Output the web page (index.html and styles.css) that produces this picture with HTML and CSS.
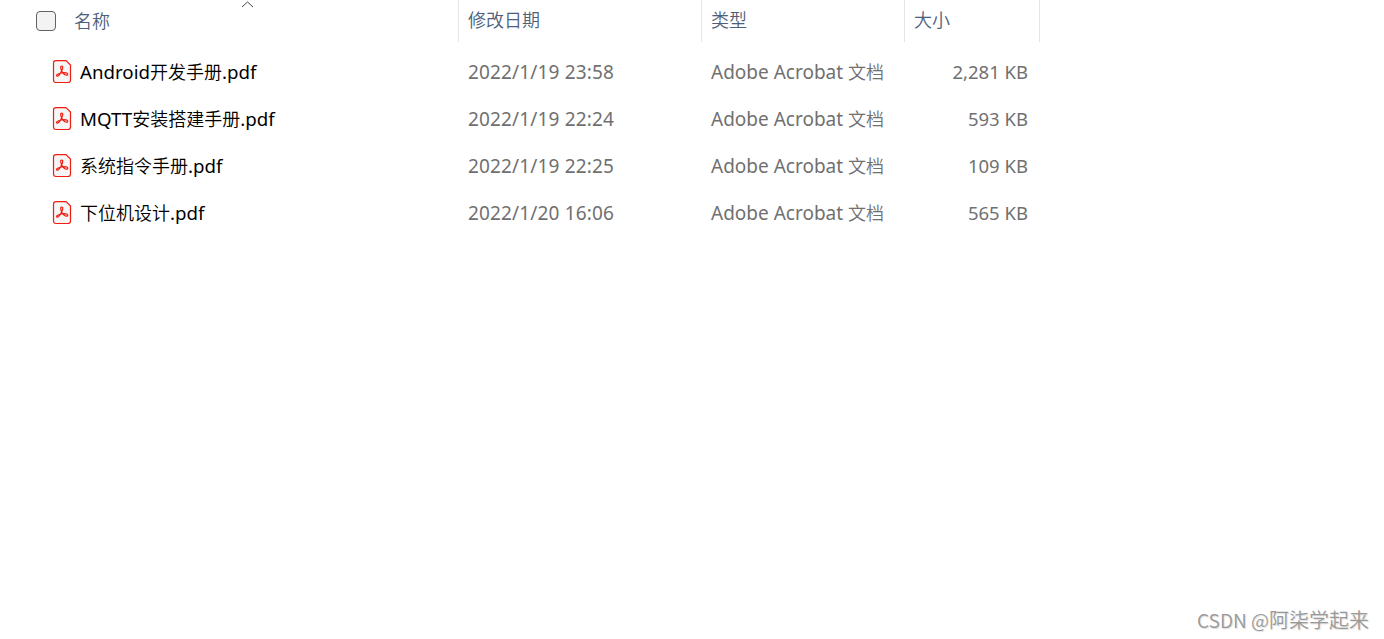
FILE: index.html
```html
<!DOCTYPE html>
<html lang="zh-CN">

<head>
    <meta charset="UTF-8">
    <title>文件列表</title>
    <link rel="stylesheet" href="styles.css">
</head>

<body>
    <!-- 图标只定义一次，下面每一行引用 -->
    <svg class="defs">
        <symbol id="pdf" viewBox="0 0 20 24">
            <path d="M4 .6H14L18.5 5V20Q18.5 22.5 16 22.5H4Q1.5 22.5 1.5 20V3Q1.5 .6 4 .6Z" fill="#f5f5f5" stroke="#f21d12" stroke-width="1.2" />
            <path d="M9.5 10.4C8.5 8.3 8.3 6 9.7 6C11.2 6 10.9 8.4 9.8 10.6C8.7 13.1 7.2 16 5.6 16.1C4.2 16.2 4 14.9 5.6 14.2C8 13 11.6 12.5 14.2 12.9C16.3 13.3 16.2 15.3 14.4 15.1C12.5 14.8 10.5 12.7 9.5 10.4Z" fill="none" stroke="#f21d12" stroke-width="1.2" />
        </symbol>
    </svg>
    <div class="row head">
        <div class="name">
            <span class="check"></span>名称
            <svg class="sort" viewBox="0 0 13 8"><path d="M1 7L6.5 2L12 7" /></svg>
        </div>
        <div>修改日期</div>
        <div>类型</div>
        <div>大小</div>
    </div>
    <div class="list">
        <div class="row">
            <div class="name"><svg class="icon"><use href="#pdf" /></svg><b>Android</b>开发手册<b>.pdf</b></div>
            <div class="date">2022/1/19 23:58</div>
            <div><b class="type">Adobe Acrobat </b>文档</div>
            <div class="size">2,281 KB</div>
        </div>
        <div class="row">
            <div class="name"><svg class="icon"><use href="#pdf" /></svg><b>MQTT</b>安装搭建手册<b>.pdf</b></div>
            <div class="date">2022/1/19 22:24</div>
            <div><b class="type">Adobe Acrobat </b>文档</div>
            <div class="size">593 KB</div>
        </div>
        <div class="row">
            <div class="name"><svg class="icon"><use href="#pdf" /></svg>系统指令手册<b>.pdf</b></div>
            <div class="date">2022/1/19 22:25</div>
            <div><b class="type">Adobe Acrobat </b>文档</div>
            <div class="size">109 KB</div>
        </div>
        <div class="row">
            <div class="name"><svg class="icon"><use href="#pdf" /></svg>下位机设计<b>.pdf</b></div>
            <div class="date">2022/1/20 16:06</div>
            <div><b class="type">Adobe Acrobat </b>文档</div>
            <div class="size">565 KB</div>
        </div>
    </div>
    <div class="watermark"><span>CSDN @</span>阿柒学起来</div>
</body>

</html>
```

FILE: styles.css
```css
* {
    box-sizing: border-box;
    padding: 0;
    margin: 0;
}

body {
    height: 639px;
    overflow: hidden;
    background-color: #fff;
    font: 18px/26px "Noto Sans", "Noto Sans CJK SC", sans-serif;
    font-weight: 350;
}

b {
    font-size: 18.7px;
    font-weight: 400;
    white-space: pre;
}

.defs {
    position: absolute;
    width: 0;
    height: 0;
}

.row {
    display: grid;
    grid-template-columns: 459px 243px 203px 135px;
    width: 1040px;
    height: 47px;
    align-items: center;
    color: #707070;
}

.row > div {
    padding-left: 9px;
    white-space: nowrap;
}

.row > .name {
    display: flex;
    align-items: center;
    padding-left: 52px;
    color: #000;
}

.head {
    height: 42px;
}

.head > div {
    height: 42px;
    line-height: 41px;
    border-right: 1px solid #e5e5e5;
    color: #4c607a;
}

.head > .name {
    position: relative;
    padding-left: 36px;
    color: #4c607a;
}

.check {
    width: 20px;
    height: 20px;
    margin-right: 18px;
    border: 1px solid #626262;
    border-radius: 4px;
    background-color: #f3f3f3;
}

.sort {
    position: absolute;
    top: 0;
    left: 241px;
    width: 13px;
    height: 8px;
    fill: none;
    stroke: #444;
}

.list {
    padding-top: 6px;
}

.icon {
    width: 20px;
    height: 24px;
    margin-right: 8px;
}

.date {
    font-size: 19px;
    font-weight: 400;
    letter-spacing: .15px;
}

.type {
    font-size: 19px;
}

.size {
    font-size: 18.5px;
    font-weight: 400;
}

.row > .size {
    padding-right: 12px;
    text-align: right;
}

.watermark {
    position: absolute;
    right: 15px;
    bottom: 6px;
    color: #999;
    font-family: "Noto Sans CJK SC", sans-serif;
    font-size: 20px;
    text-shadow: 1px 1px 1px #ddd;
}

.watermark span {
    font-size: 19.2px;
}
```
